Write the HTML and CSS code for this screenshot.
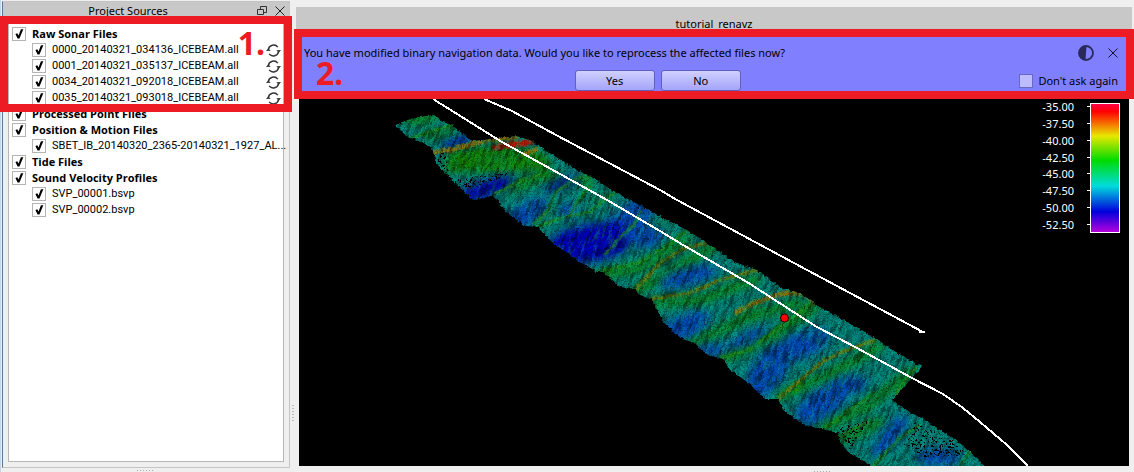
FILE: index.html
```html
<!DOCTYPE html>
<html lang="en">
<head>
<meta charset="utf-8">
<title>tutorial_renavz</title>
<link rel="stylesheet" href="styles.css">
</head>
<body>
<svg class="defs" aria-hidden="true">
  <symbol id="refresh" viewBox="0 0 16 16">
    <path d="M2.500 7A5.700 5.700 0 0 1 12.600 4.400M13.500 9A5.700 5.700 0 0 1 3.400 11.600" fill="none" stroke="#333" stroke-width="1.500"/>
    <path d="M0 8.600L2.400 5.600L5 8.200ZM16 7.400L13.600 10.400L11 7.800Z" fill="#333"/>
  </symbol>
</svg>
<div class="app">
  <aside class="sidebar">
    <section class="dock">
      <header class="dock-head">
        <h2 class="dock-title">Project Sources</h2>
        <button class="icon-btn" aria-label="Float"><svg width="10" height="10" viewBox="0 0 10 10" fill="none" stroke="#333"><path d="M3.500 3.500V.5H9.500V6.500H6.500M.5 3.500H6.500V8.500H.5Z"/></svg></button>
        <button class="icon-btn" aria-label="Close"><svg width="10" height="10" viewBox="0 0 10 10" stroke="#222"><path d="M.5 .5L9.500 9.500M9.500 .5L.5 9.500"/></svg></button>
      </header>
      <ul class="tree">
        <li><label class="row group"><input type="checkbox" checked>Raw Sonar Files</label>
          <ul>
            <li class="file"><label class="row"><input type="checkbox" checked><span class="name">0000_20140321_034136_ICEBEAM.all</span></label><svg class="refresh"><use href="#refresh"/></svg></li>
            <li class="file"><label class="row"><input type="checkbox" checked><span class="name">0001_20140321_035137_ICEBEAM.all</span></label><svg class="refresh"><use href="#refresh"/></svg></li>
            <li class="file"><label class="row"><input type="checkbox" checked><span class="name">0034_20140321_092018_ICEBEAM.all</span></label><svg class="refresh"><use href="#refresh"/></svg></li>
            <li class="file"><label class="row"><input type="checkbox" checked><span class="name">0035_20140321_093018_ICEBEAM.all</span></label><svg class="refresh"><use href="#refresh"/></svg></li>
          </ul>
        </li>
        <li><label class="row group"><input type="checkbox" checked>Processed Point Files</label></li>
        <li><label class="row group"><input type="checkbox" checked>Position &amp; Motion Files</label>
          <ul>
            <li class="file"><label class="row"><input type="checkbox" checked><span class="name">SBET_IB_20140320_2365-20140321_1927_AL...</span></label></li>
          </ul>
        </li>
        <li><label class="row group"><input type="checkbox" checked>Tide Files</label></li>
        <li><label class="row group"><input type="checkbox" checked>Sound Velocity Profiles</label>
          <ul>
            <li class="file"><label class="row"><input type="checkbox" checked><span class="name">SVP_00001.bsvp</span></label></li>
            <li class="file"><label class="row"><input type="checkbox" checked><span class="name">SVP_00002.bsvp</span></label></li>
          </ul>
        </li>
      </ul>
    </section>
    <div class="grip"></div>
    <div class="callout callout-one"><b>1.</b></div>
  </aside>
  <div class="splitter"></div>
  <main class="main">
    <h1 class="view-title">tutorial_renavz</h1>
    <section class="notice">
      <div class="notice-line">
        <p class="message">You have modified binary navigation data. Would you like to reprocess the affected files now?</p>
        <button class="icon-btn" aria-label="Toggle contrast"><svg width="16" height="16" viewBox="0 0 16 16"><circle cx="8" cy="8" r="7" fill="none" stroke="#29295c" stroke-width="1.800"/><path d="M8.500 1A7 7 0 0 0 7.500 15Z" fill="#29295c"/></svg></button>
        <button class="icon-btn" aria-label="Dismiss"><svg width="10" height="10" viewBox="0 0 10 10" stroke="#111133"><path d="M.5 .5L9.500 9.500M9.500 .5L.5 9.500"/></svg></button>
      </div>
      <div class="notice-line actions">
        <div class="buttons"><button class="push">Yes</button><button class="push">No</button></div>
        <label class="dont-ask"><input type="checkbox">Don't ask again</label>
      </div>
    </section>
    <div class="viewport">
      <svg class="terrain" viewBox="299 99 830 367" preserveAspectRatio="xMidYMid slice" role="img" aria-label="Bathymetry surface with survey track lines">
        <defs>
          <path id="swath" d="M395 125L413 118 433 115 442 121 452 125 472 141 483 140 517 136 530 140 553 155 577 170 590 176 615 192 645 208 667 220 687 230 707 243 735 262 757 270 780 287 800 293 820 307 840 318 875 338 893 350 922 367 892 400 907 410 933 425 960 443 987 468 875 468 848 452 840 442 838 433 823 429 807 426 783 410 778 399 766 399 747 382 730 370 723 359 707 355 695 343 682 339 663 322 652 300 640 295 635 289 620 287 603 272 597 272 580 262 553 243 537 227 525 226 507 213 493 195 485 198 473 200 460 188 445 173 436 163 432 148 420 141 407 137Z"/>
          <clipPath id="edge"><use href="#swath"/></clipPath>
          <filter id="soft" x="-30%" y="-30%" width="160%" height="160%" color-interpolation-filters="sRGB"><feGaussianBlur stdDeviation="4"/></filter>
          <filter id="fine" x="-10%" y="-10%" width="120%" height="120%" color-interpolation-filters="sRGB"><feGaussianBlur stdDeviation="1"/></filter>
          <filter id="ragged" filterUnits="userSpaceOnUse" x="380" y="100" width="620" height="370" color-interpolation-filters="sRGB">
            <feTurbulence type="fractalNoise" baseFrequency=".3" numOctaves="2" seed="4" result="n"/>
            <feDisplacementMap in="SourceGraphic" in2="n" scale="4" xChannelSelector="R" yChannelSelector="G"/>
          </filter>
          <filter id="ripple" filterUnits="userSpaceOnUse" x="-500" y="-500" width="1000" height="1000" color-interpolation-filters="sRGB">
            <feTurbulence type="fractalNoise" baseFrequency=".07 .32" numOctaves="2" seed="8"/>
            <feColorMatrix values="0 0 0 0 0  0 0 0 0 0  0 0 0 0 0  5 0 0 0 -2.300"/>
          </filter>
          <filter id="glint" filterUnits="userSpaceOnUse" x="-500" y="-500" width="1000" height="1000" color-interpolation-filters="sRGB">
            <feTurbulence type="fractalNoise" baseFrequency=".07 .32" numOctaves="2" seed="21"/>
            <feColorMatrix values="0 0 0 0 0  0 0 0 0 .75  0 0 0 0 .6  5 0 0 0 -2.500"/>
          </filter>
          <filter id="grain" filterUnits="userSpaceOnUse" x="380" y="100" width="620" height="370" color-interpolation-filters="sRGB">
            <feTurbulence type="fractalNoise" baseFrequency=".7" numOctaves="1" seed="3"/>
            <feColorMatrix values="0 0 0 0 0  0 0 0 0 0  0 0 0 0 0  4 0 0 0 -1.800"/>
          </filter>
          <filter id="holes" filterUnits="userSpaceOnUse" x="380" y="100" width="620" height="370" color-interpolation-filters="sRGB">
            <feTurbulence type="fractalNoise" baseFrequency=".5" numOctaves="2" seed="12" result="n"/>
            <feColorMatrix values="0 0 0 0 0  0 0 0 0 0  0 0 0 0 0  14 0 0 0 -7.900"/>
            <feComposite in2="SourceGraphic" operator="in"/>
          </filter>
        </defs>
        <g filter="url(#ragged)">
          <g clip-path="url(#edge)">
            <use href="#swath" fill="#00887f"/>
            <g filter="url(#soft)" fill="none" stroke-linecap="round">
              <path stroke="#138a00" stroke-width="12" d="M452 156L500 150 540 158M450 166L500 166 545 164"/>
              <path stroke="#0c8a06" stroke-width="8" d="M408 121L433 117M428 135L452 129M500 192L545 176 590 182M600 275L640 268 687 238M636 291L665 274 712 248M655 303L700 300 757 279M690 344L745 318 800 303M725 358L770 338 815 307M780 396L830 374 880 346M823 428L865 408 910 372M842 440L880 422"/>
              <path stroke="#0c8a30" stroke-width="4" d="M590 200L612 194M535 226L558 204M628 235L665 222M760 300L735 320M900 425L880 462"/>
              <g fill="#004cbc">
                <ellipse cx="440" cy="128" rx="12" ry="2" transform="rotate(-15 440 128)" fill="#005a90"/>
                <ellipse cx="458" cy="142" rx="18" ry="5" transform="rotate(-15 458 142)" fill="#001cac"/>
                <ellipse cx="486" cy="189" rx="30" ry="9" transform="rotate(-18 486 189)" fill="#000ab8"/>
                <ellipse cx="526" cy="214" rx="25" ry="11" transform="rotate(-30 526 214)"/>
                <ellipse cx="562" cy="183" rx="20" ry="6" transform="rotate(-20 562 183)" fill="#002898"/>
                <ellipse cx="626" cy="222" rx="38" ry="14" transform="rotate(-38 626 222)"/>
                <ellipse cx="590" cy="243" rx="46" ry="19" transform="rotate(-10 590 243)" fill="#0000c0"/>
                <ellipse cx="644" cy="236" rx="20" ry="11"/>
                <ellipse cx="568" cy="211" rx="11" ry="7"/>
                <ellipse cx="688" cy="276" rx="30" ry="9" transform="rotate(-15 688 276)"/>
                <ellipse cx="684" cy="327" rx="28" ry="12" transform="rotate(-25 684 327)"/>
                <ellipse cx="710" cy="350" rx="18" ry="6"/>
                <ellipse cx="748" cy="339" rx="24" ry="6" transform="rotate(-25 748 339)"/>
                <ellipse cx="768" cy="371" rx="32" ry="16" transform="rotate(-55 768 371)"/>
                <ellipse cx="801" cy="345" rx="30" ry="13" transform="rotate(-20 801 345)"/>
                <ellipse cx="824" cy="402" rx="34" ry="14" transform="rotate(-35 824 402)"/>
                <ellipse cx="850" cy="384" rx="18" ry="8"/>
                <ellipse cx="890" cy="436" rx="26" ry="9" transform="rotate(-50 890 436)"/>
                <ellipse cx="938" cy="457" rx="22" ry="9"/>
              </g>
            </g>
            <g filter="url(#fine)" fill="none" stroke-linejoin="round" stroke="#2c9a00" stroke-width="2">
              <path d="M410 138L430 132 452 125M493 195L520 181 545 174M533 225L548 210 556 192 577 178 590 176M570 215L580 198 590 186M537 227L565 217 590 212 600 203 615 192M605 255L622 235 634 225 642 210M603 271L640 262 665 247 687 230M720 358L750 350 778 328 812 303M823 429L850 410 875 392M838 438L870 420M873 466L900 438 920 425M960 465L972 450M795 393L803 380M895 395L917 365"/>
              <path stroke="#7a8200" stroke-width="3" d="M636 289L660 263 685 248 707 243M650 299L690 293 720 280 757 270M778 399L800 380 825 360 845 351 875 340"/>
              <path stroke="#a07800" stroke-width="4" d="M432 153L455 149 483 141 517 137M735 313L752 304 780 294 804 293 817 304M523 154L538 149"/>
              <path stroke="#c01800" stroke-width="6" d="M492 148L508 145 533 142"/>
            </g>
            <g class="ripples">
              <rect x="-500" y="-500" width="1000" height="1000" transform="translate(680 290) rotate(-68)" filter="url(#ripple)"/>
            </g>
            <g class="glints">
              <rect x="-500" y="-500" width="1000" height="1000" transform="translate(680 290) rotate(-68)" filter="url(#glint)"/>
            </g>
            <rect class="grain" x="380" y="100" width="620" height="370" filter="url(#grain)"/>
            <g filter="url(#holes)"><path d="M432 153L448 153 450 178 436 166ZM915 422L952 440 968 455 925 458 905 445ZM450 180L510 172 500 180 460 190ZM838 428L870 420 850 450Z"/></g>
          </g>
        </g>
        <g fill="none" stroke="#fff" stroke-width="2" shape-rendering="crispEdges">
          <path d="M433 99L502 142 580 185 607 200 660 231 683 245 747 282 795 313 817 327 857 348 910 377 943 394 963 408 980 422 1007 445 1028 466"/>
          <path d="M484 99L512 111 556 135 660 190 677 200 807 270 923 332M919 332H925"/>
        </g>
        <circle cx="784.500" cy="318" r="4" fill="#f00" stroke="#200"/>
      </svg>
      <div class="legend">
        <ol class="scale"><li>-35.00</li><li>-37.50</li><li>-40.00</li><li>-42.50</li><li>-45.00</li><li>-47.50</li><li>-50.00</li><li>-52.50</li></ol>
        <div class="ramp"></div>
      </div>
    </div>
    <div class="grip view-grip"></div>
    <div class="callout callout-two"><b>2.</b></div>
  </main>
</div>
</body>
</html>
```
FILE: styles.css
```css
* { box-sizing: border-box; }
body {
  margin: 0;
  background: #efefef;
  color: #000;
  font: 11px/16px "Noto Sans", "Open Sans", sans-serif;
}
ul, ol { list-style: none; margin: 0; padding: 0; }
h1, h2, p { margin: 0; font-size: 11px; font-weight: 400; }
.defs { position: absolute; width: 0; height: 0; }
.app { display: flex; height: 100vh; overflow: hidden; }

.sidebar {
  position: relative;
  display: flex;
  flex-direction: column;
  flex: 0 0 292px;
  min-width: 0;
  padding: 1px 2px 0 1px;
  border-left: 1px solid #c3d6e8;
}
.dock {
  display: flex;
  flex-direction: column;
  flex: 1;
  min-height: 0;
  border: 1px solid #c4c4c4;
  border-left: 1px solid #5f7890;
}
.dock-head {
  display: flex;
  align-items: center;
  gap: 8px;
  height: 21px;
  padding: 0 4px 3px 0;
  background: #c8c8c8;
}
.dock-title { flex: 1; padding-left: 4px; text-align: center; }
.icon-btn { display: flex; padding: 0; border: 0; background: none; }
.tree {
  flex: 1;
  min-width: 0;
  margin: 0 5px 5px;
  padding: 2px 2px 2px 3px;
  background: #fff;
  border: 1px solid #b6b6b6;
  font-family: "Open Sans", "Noto Sans", sans-serif;
}
.tree ul { padding-left: 20px; }
.row { display: flex; align-items: center; gap: 6px; height: 16px; min-width: 0; white-space: nowrap; }
.group { font-weight: 700; }
.name { font-family: Roboto, "Open Sans", sans-serif; }
.file { display: flex; align-items: center; justify-content: space-between; }
.refresh { flex: none; width: 15px; height: 15px; }
input {
  appearance: none;
  flex: none;
  width: 14px;
  height: 14px;
  margin: 0;
  border: 1px solid #b4b4b4;
  background: #fff;
}
.tree input:checked::before {
  content: "";
  display: block;
  width: 12px;
  height: 12px;
  background: #000;
  clip-path: polygon(20% 50%, 36% 44%, 46% 62%, 66% 10%, 86% 10%, 54% 88%, 38% 88%);
}
.grip {
  flex: none;
  align-self: center;
  width: 18px;
  height: 1px;
  margin: 2px 0 1px;
  background: repeating-linear-gradient(90deg, #aaa 0 1px, transparent 1px 3px);
}
.view-grip { align-self: flex-start; margin: 5px 0 0 62%; }
.splitter {
  flex: none;
  align-self: flex-end;
  width: 2px;
  height: 16px;
  margin-bottom: 51px;
  background: repeating-linear-gradient(#bbb 0 1px, transparent 1px 3px);
}

.main {
  position: relative;
  display: flex;
  flex-direction: column;
  flex: 1;
  min-width: 0;
  padding: 7px 2px 0;
}
.view-title {
  height: 30px;
  padding-top: 9px;
  background: #c8c8c8;
  text-align: center;
}
.notice {
  margin: 0 3px;
  padding: 8px 10px 0 5px;
  height: 62px;
  background: #8080ff;
  border-right: 1px solid #6060c0;
}
.notice-line { display: flex; align-items: center; gap: 14px; }
.message { flex: 1; }
.actions { margin-top: 9px; gap: 8px; }
.buttons { display: flex; flex: 1; justify-content: center; gap: 6px; }
.push {
  width: 80px;
  height: 21px;
  padding: 0;
  border: 1px solid #6060c0;
  border-radius: 3px;
  background: linear-gradient(#d0d0ff, #a4a4fa);
  font: inherit;
}
.dont-ask { display: flex; align-items: center; gap: 5px; }
.dont-ask input { border-color: #6868c8; background: #bcbcff; }

.viewport { position: relative; flex: 1; min-height: 0; margin: 0 3px; background: #000; }
.terrain { display: block; width: 100%; height: 100%; }
.ripples { opacity: .4; }
.glints { opacity: .3; }
.grain { opacity: .35; }
.legend { position: absolute; top: 4px; right: 9px; display: flex; gap: 16px; }
.scale {
  display: flex;
  flex-direction: column;
  justify-content: space-between;
  height: 134px;
  margin-top: -4px;
  color: #fff;
}
.scale li { position: relative; }
.scale li::after {
  content: "";
  position: absolute;
  top: 7px;
  right: -16px;
  width: 3px;
  height: 1px;
  background: #fff;
}
.ramp {
  width: 30px;
  height: 130px;
  border: 1px solid #fff;
  background: linear-gradient(#ff0048, #f00 6%, #e8e800 25%, #00dc00 44%, #00dcdc 64%, #0000dc 84%, #b400dc);
}

.callout { position: absolute; border: 8px solid #ed1c24; color: #ed1c24; pointer-events: none; }
.callout b { position: absolute; font: 700 32px/24px "Noto Sans", "Open Sans", sans-serif; }
.callout-one { top: 16px; left: -1px; right: 0; height: 96px; }
.callout-one b { top: 7px; right: 19px; }
.callout-two { top: 29px; left: 0; right: 0; height: 70px; }
.callout-two b { top: 24px; left: 14px; }
```
